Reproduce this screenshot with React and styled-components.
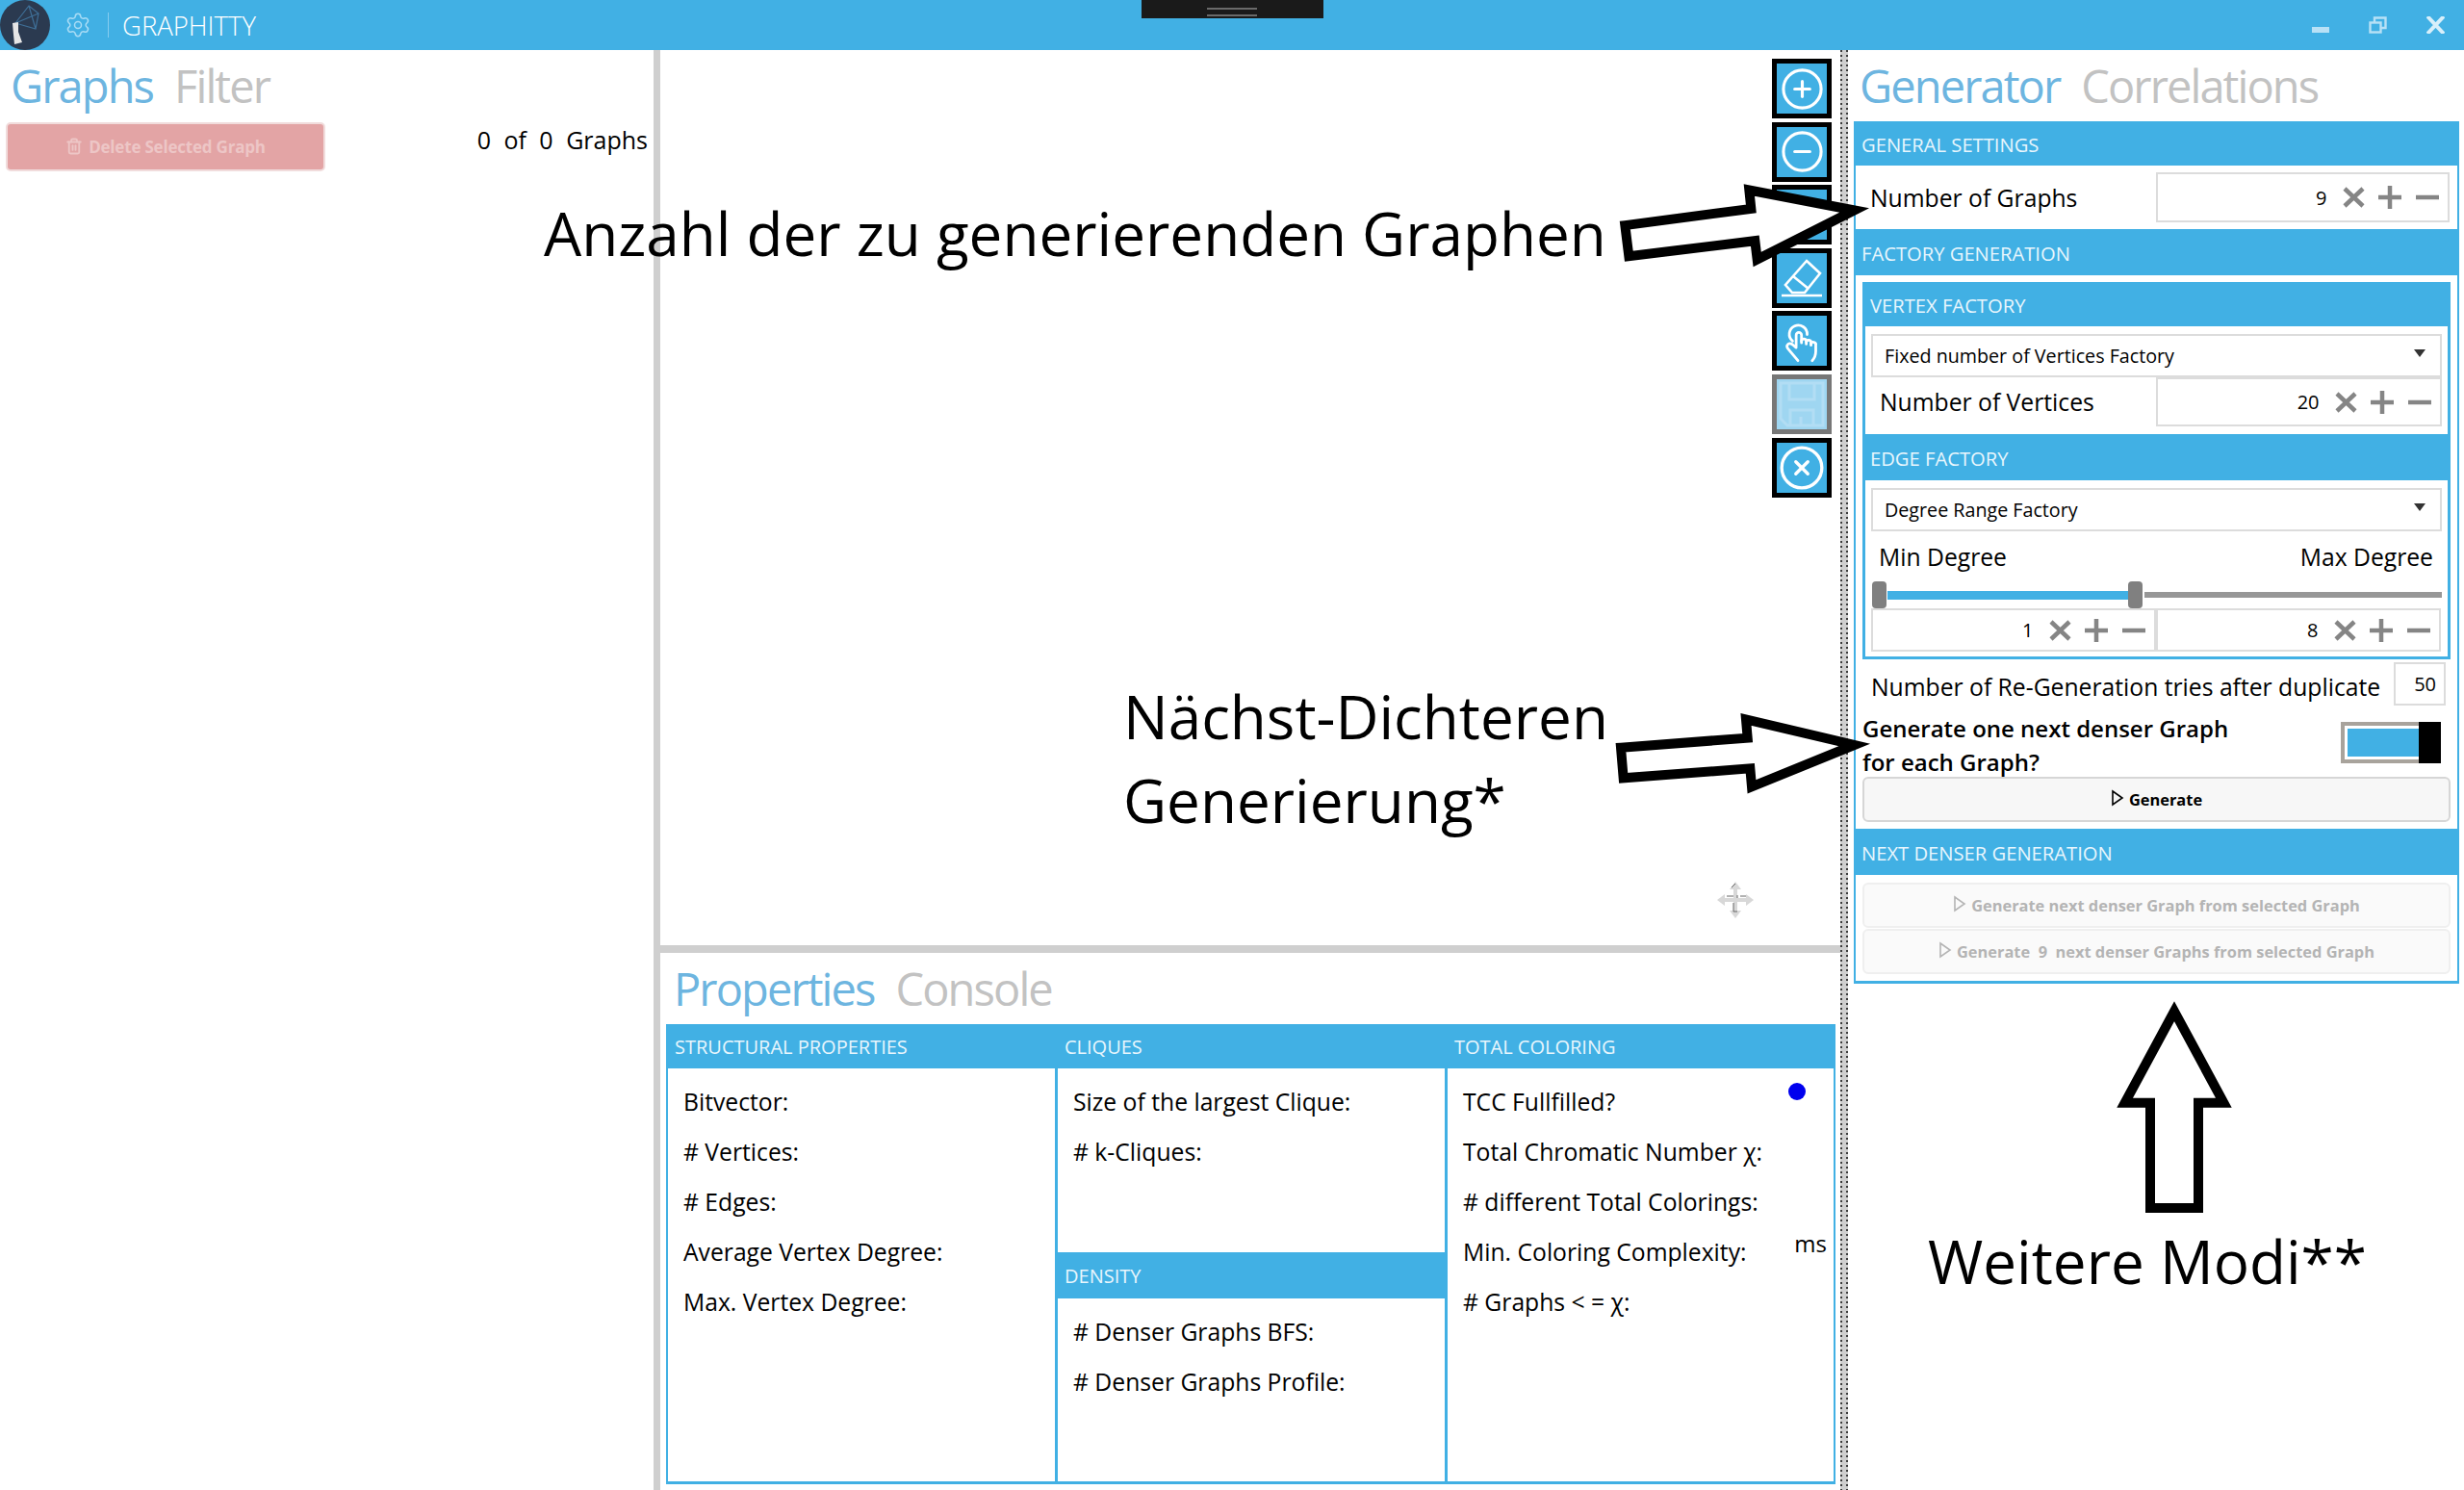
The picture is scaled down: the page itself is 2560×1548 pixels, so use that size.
import React from "react";
import styled, { createGlobalStyle } from "styled-components";
import { Settings, CirclePlus, CircleMinus, CircleX, Trash2 } from "lucide-react";

const BLUE = "#41b0e4";
const FONT = `"Open Sans", "Noto Sans", "Liberation Sans", sans-serif`;

const Global = createGlobalStyle`
  html, body { margin: 0; padding: 0; background: #fff; }
  * { box-sizing: border-box; }
  #root { height: 1548px; overflow: hidden; font-family: ${FONT}; font-stretch: 90%; color: #000; }
`;

const Page = styled.div`
  position: relative;
  width: 2560px;
  height: 1548px;
  display: flex;
  flex-direction: column;
  overflow: hidden;
`;

/* title bar */
const TitleBar = styled.header`
  position: relative;
  height: 52px;
  flex: none;
  background: ${BLUE};
  display: flex;
  align-items: center;
  color: #fff;
`;
const Logo = styled.svg`
  width: 52px;
  height: 52px;
  flex: none;
`;
const Gear = styled.div`
  display: flex;
  margin-left: 15px;
  color: #a9dcf5;
`;
const TitleDivider = styled.div`
  width: 1px;
  height: 26px;
  margin: 0 14px 0 17px;
  background: #86cdef;
`;
const AppName = styled.div`
  font-size: 27.5px;
  font-weight: 300;
`;
const DockHandle = styled.div`
  position: absolute;
  left: 1186px;
  top: 0;
  width: 189px;
  height: 19px;
  background: #1a1a1a;
  &::after {
    content: "";
    position: absolute;
    left: 68px;
    top: 8px;
    width: 52px;
    height: 5px;
    border-top: 2px solid #6a6a6a;
    border-bottom: 2px solid #6a6a6a;
  }
`;
const WindowButtons = styled.div`
  margin-left: auto;
  display: flex;
  align-items: center;
  gap: 41px;
  padding-right: 20px;
`;

/* main columns */
const Main = styled.main`
  flex: 1;
  display: flex;
  min-height: 0;
`;
const LeftPane = styled.section`
  width: 679px;
  flex: none;
  padding: 0 6px 0 6px;
`;
const VSplit = styled.div`
  width: 7px;
  flex: none;
  background: #cfcfcf;
`;
const CenterPane = styled.section`
  flex: 1;
  display: flex;
  flex-direction: column;
  min-width: 0;
`;
const DottedSplit = styled.div`
  width: 8px;
  flex: none;
  background-color: #cfcfcf;
  background-image:
    repeating-linear-gradient(to bottom, #3c3c3c 0 2px, transparent 2px 5px),
    repeating-linear-gradient(to bottom, #3c3c3c 0 2px, transparent 2px 5px);
  background-size: 2px 100%, 2px 100%;
  background-position: left top, right top;
  background-repeat: no-repeat;
`;
const RightPane = styled.section`
  width: 640px;
  flex: none;
  padding: 0 5px 0 6px;
`;

const Tabs = styled.div`
  height: ${(p) => p.$h || 74}px;
  display: flex;
  align-items: center;
  gap: ${(p) => p.$gap || 22}px;
  padding-left: ${(p) => p.$pad || 0}px;
`;
const Tab = styled.span`
  font-size: 47px;
  font-weight: 400;
  line-height: 1;
  letter-spacing: -1.9px;
  color: ${(p) => (p.$active ? "#6db5e0" : "#c2c2c2")};
`;

const GraphsBar = styled.div`
  display: flex;
  align-items: center;
  justify-content: space-between;
  height: 52px;
`;
const DeleteButton = styled.div`
  width: 332px;
  height: 51px;
  display: flex;
  align-items: center;
  justify-content: center;
  gap: 6px;
  background: #e3a4a5;
  border: 2px solid #f1dcdc;
  border-radius: 5px;
  color: #edc6c6;
  font-size: 17px;
  font-weight: 700;
  letter-spacing: -0.2px;
`;
const GraphCount = styled.div`
  font-size: 25px;
  word-spacing: 7px;
  margin-top: -14px;
`;

/* center */
const Canvas = styled.div`
  height: 930px;
  flex: none;
  display: flex;
  flex-direction: column;
  align-items: flex-end;
  gap: 3.6px;
  padding: 9px 9px 0 0;
`;
const ToolButton = styled.div`
  width: 62px;
  height: 62px;
  display: flex;
  align-items: center;
  justify-content: center;
  background: ${(p) => (p.$off ? "#9fd6f1" : BLUE)};
  border: 5px solid ${(p) => (p.$off ? "#777" : "#000")};
  color: ${(p) => (p.$off ? "#b2ddf4" : "#fff")};
`;
const HSplit = styled.div`
  height: 8px;
  flex: none;
  background: #cfcfcf;
`;
const PropertiesArea = styled.div`
  flex: 1;
  display: flex;
  flex-direction: column;
  padding: 0 5px 6px 6px;
  min-height: 0;
`;
const PropGrid = styled.div`
  flex: 1;
  display: grid;
  grid-template-columns: 402px 405px 404px;
  border: solid ${BLUE};
  border-width: 0 2px 3px 2px;
`;
const PropColumn = styled.div`
  display: flex;
  flex-direction: column;
  & + & {
    border-left: 3px solid ${BLUE};
  }
`;
const PropHeader = styled.div`
  height: ${(p) => p.$h}px;
  flex: none;
  display: flex;
  align-items: center;
  background: ${BLUE};
  color: #e8f6fd;
  font-size: 20px;
  margin: ${(p) => (p.$inner ? "0 0 0 -3px" : "0 0 0 -2px")};
  padding-left: ${(p) => (p.$inner ? 10 : 9)}px;
`;
const PropList = styled.div`
  padding: 8px 5px 0 16px;
  height: ${(p) => p.$h || "auto"};
`;
const PropRow = styled.div`
  height: 52px;
  display: flex;
  align-items: center;
  justify-content: space-between;
  font-size: 24.7px;
  white-space: nowrap;
`;
const Dot = styled.span`
  width: 18px;
  height: 18px;
  margin: 0 24px 20px 0;
  border-radius: 50%;
  background: #0000ee;
`;
const Unit = styled.span`
  margin: 0 2px 18px 0;
  font-size: 24px;
`;

/* generator panel */
const Panel = styled.div`
  border: solid ${BLUE};
  border-width: 0 2px 3px 2px;
  height: 896px;
`;
const Header = styled.div`
  height: ${(p) => p.$h || 46}px;
  display: flex;
  align-items: center;
  padding: 2px 0 0 ${(p) => (p.$inner ? 8 : 6)}px;
  background: ${BLUE};
  color: #e8f6fd;
  font-size: 20.2px;
`;
const NumberRow = styled.div`
  height: ${(p) => p.$h}px;
  display: flex;
  align-items: center;
  justify-content: space-between;
  padding: ${(p) => p.$pad};
`;
const Label = styled.span`
  font-size: 24.7px;
  white-space: nowrap;
`;
const Spin = styled.div`
  width: ${(p) => p.$w}px;
  height: ${(p) => p.$hgt}px;
  display: flex;
  align-items: center;
  justify-content: flex-end;
  padding-right: 2px;
  border: 2px solid #dcdcdc;
  font-size: 20px;
`;
const SpinValue = styled.span`
  margin-right: 8px;
`;
const SpinGlyph = styled.svg`
  width: 38.5px;
  height: 28px;
  flex: none;
  stroke: #858585;
  stroke-width: 4.5;
  fill: none;
`;
const InnerBox = styled.div`
  margin: 7px 7px 0;
  height: 392px;
  border: solid ${BLUE};
  border-width: 0 3px 3px 3px;
`;
const BoxHeaderWrap = styled.div`
  margin: 0 -3px;
`;
const BoxBody = styled.div`
  padding: 8px 6px ${(p) => p.$bottom || 0}px;
`;
const Select = styled.div`
  height: 45px;
  display: flex;
  align-items: center;
  justify-content: space-between;
  padding: 0 15px 0 12px;
  border: 2px solid #dcdcdc;
  font-size: 19.7px;
  &::after {
    content: "";
    margin-top: -5px;
    border: 6px solid transparent;
    border-top: 8px solid #333;
    border-bottom: 0;
  }
`;
const DegreeLabels = styled.div`
  height: 52px;
  display: flex;
  align-items: center;
  justify-content: space-between;
  padding: 0 9px 0 8px;
`;
const Slider = styled.div`
  height: 28px;
  display: flex;
  align-items: center;
`;
const Thumb = styled.div`
  width: 15px;
  height: 28px;
  flex: none;
  margin-left: ${(p) => (p.$first ? 1 : 0)}px;
  border-radius: 4px;
  background: #808080;
`;
const Fill = styled.div`
  flex: ${(p) => (p.$rest ? "1" : "none")};
  width: ${(p) => (p.$rest ? "auto" : "250px")};
  height: ${(p) => (p.$rest ? 6 : 9)}px;
  margin-left: ${(p) => (p.$rest ? 2 : 1)}px;
  background: ${(p) => (p.$rest ? "#979797" : BLUE)};
`;
const SpinPair = styled.div`
  display: grid;
  grid-template-columns: 296px 296px;
`;
const RegenRow = styled.div`
  height: 56px;
  display: flex;
  align-items: center;
  justify-content: space-between;
  padding: 0 12px 0 16px;
`;
const RegenInput = styled.div`
  width: 54px;
  height: 45px;
  margin-top: -5px;
  padding-right: 8px;
  display: flex;
  align-items: center;
  justify-content: flex-end;
  border: 2px solid #dcdcdc;
  font-size: 20px;
`;
const ToggleRow = styled.div`
  height: 66px;
  display: flex;
  align-items: center;
  justify-content: space-between;
  padding: 0 17px 0 7px;
`;
const ToggleText = styled.div`
  font-size: 24px;
  font-weight: 600;
  line-height: 35px;
`;
const Toggle = styled.div`
  width: 104px;
  height: 43px;
  display: flex;
  margin-bottom: 6px;
  padding: 3px 0 3px 3px;
  background: #fff;
  border: 4px solid #a8a39c;
  border-right: 0;
`;
const ToggleFill = styled.div`
  flex: 1;
  background: ${BLUE};
`;
const ToggleKnob = styled.div`
  width: 23px;
  margin: -7px 0;
  background: #000;
`;
const ActionGroup = styled.div`
  padding: ${(p) => p.$pad};
  display: flex;
  flex-direction: column;
  gap: 1px;
`;
const ActionButton = styled.div`
  height: 47px;
  display: flex;
  align-items: center;
  justify-content: center;
  gap: 5px;
  border: 2px solid ${(p) => (p.$off ? "#efefef" : "#d6d6d6")};
  border-radius: 6px;
  background: ${(p) => (p.$off ? "#fafafa" : "#f7f7f7")};
  color: ${(p) => (p.$off ? "#b4b4b4" : "#000")};
  font-size: 16.4px;
  font-weight: 700;
  white-space: pre;
`;
const PlayMark = styled.svg`
  width: 14px;
  height: 18px;
  margin-top: -4px;
  fill: none;
  stroke: ${(p) => (p.$off ? "#b4b4b4" : "#000")};
  stroke-width: 1.6;
`;

/* annotations drawn over the app */
const Note = styled.div`
  position: absolute;
  left: ${(p) => p.$x}px;
  top: ${(p) => p.$y}px;
  font-size: 62px;
  line-height: 87px;
  white-space: nowrap;
`;
const ArrowMark = styled.svg`
  position: absolute;
  left: ${(p) => p.$x}px;
  top: ${(p) => p.$y}px;
  overflow: visible;
  fill: #fff;
  stroke: #000;
  stroke-width: 30;
  stroke-linejoin: miter;
  stroke-miterlimit: 10;
`;
const MoveCursor = styled.svg`
  position: absolute;
  left: 1784px;
  top: 916px;
  width: 38px;
  height: 38px;
`;

const Play = ({ off }) => (
  <PlayMark $off={off} viewBox="0 0 14 18">
    <polygon points="2,2 12,9 2,16" />
  </PlayMark>
);

const SpinIcons = () => (
  <>
    <SpinGlyph viewBox="0 0 38.5 28">
      <path d="M10 5 L29 23 M29 5 L10 23" />
    </SpinGlyph>
    <SpinGlyph viewBox="0 0 38.5 28">
      <path d="M7 14 H31 M19 2 V26" />
    </SpinGlyph>
    <SpinGlyph viewBox="0 0 38.5 28">
      <path d="M7 14 H31" />
    </SpinGlyph>
  </>
);

const SpinBox = ({ w, h, value }) => (
  <Spin $w={w} $hgt={h}>
    <SpinValue>{value}</SpinValue>
    <SpinIcons />
  </Spin>
);

const EraserIcon = () => (
  <svg width="44" height="44" viewBox="0 0 44 44" fill="none" stroke="#fff" strokeWidth="2.6">
    <path d="M27 4 L41 17 L25 37 L12 37 L5 29 Z" />
    <path d="M13 20 L29 33" />
    <path d="M1 40 H43" />
  </svg>
);

const HandIcon = () => (
  <svg width="50" height="50" viewBox="0 0 162 162" fill="none" stroke="#fff" strokeWidth="9" strokeLinecap="round">
    <path d="M50 82 A30 30 0 1 1 99 60" />
    <path d="M62 100 V62 a9 9 0 0 1 18 0 V88" />
    <path d="M80 82 a8 8 0 0 1 16 2 v8" />
    <path d="M96 86 a8 8 0 0 1 16 2 v8" />
    <path d="M112 92 a8 8 0 0 1 16 4 v20 q0 20 -12 32" />
    <path d="M62 104 l-12 -10 q-12 -8 -18 2 q-3 6 4 14 L68 148" />
  </svg>
);

const SaveIcon = () => (
  <svg width="50" height="50" viewBox="0 0 50 50" fill="none" stroke="currentColor" strokeWidth="3">
    <path d="M3 3 H47 V47 H10 L3 40 Z" />
    <path d="M12 3 V20 H38 V3" />
    <path d="M13 47 V31 H37 V47" />
    <path d="M24 38 V47" />
  </svg>
);

const AppLogo = () => (
  <Logo viewBox="0 0 52 52">
    <circle cx="26" cy="26" r="26" fill="#2b3a50" />
    <g stroke="#3f6f97" strokeWidth="1.2" fill="none">
      <path d="M16 24 L30 6 L40 14 L37 30 Z M16 24 L40 14 M16 24 L37 30 M30 6 L37 30" />
    </g>
    <path d="M13 24 L19 23 L19 33 L23 44 L15 46 L14 36 Z" fill="#e6e6e6" />
  </Logo>
);

const WindowIcons = () => (
  <WindowButtons>
    <svg width="18" height="18" viewBox="0 0 18 18">
      <rect x="0" y="11" width="18" height="6" fill="#b8e1f6" />
    </svg>
    <svg width="19" height="18" viewBox="0 0 19 18" fill="none" stroke="#b8e1f6" strokeWidth="2.4">
      <rect x="1.5" y="6.5" width="11" height="10" />
      <path d="M6 6 V1.5 H17.5 V12 H13" />
    </svg>
    <svg width="19" height="18" viewBox="0 0 19 18" fill="none" stroke="#d7effa" strokeWidth="4">
      <path d="M1 0 L18 18 M18 0 L1 18" />
    </svg>
  </WindowButtons>
);

const rows1 = ["Bitvector:", "# Vertices:", "# Edges:", "Average Vertex Degree:", "Max. Vertex Degree:"];

export default function App() {
  return (
    <Page>
      <Global />
      <TitleBar>
        <AppLogo />
        <Gear><Settings size={28} strokeWidth={1.3} /></Gear>
        <TitleDivider />
        <AppName>GRAPHITTY</AppName>
        <DockHandle />
        <WindowIcons />
      </TitleBar>

      <Main>
        <LeftPane>
          <Tabs $pad={5}>
            <Tab $active>Graphs</Tab>
            <Tab>Filter</Tab>
          </Tabs>
          <GraphsBar>
            <DeleteButton>
              <Trash2 size={18} strokeWidth={2.5} />
              Delete Selected Graph
            </DeleteButton>
            <GraphCount>0 of 0 Graphs</GraphCount>
          </GraphsBar>
        </LeftPane>
        <VSplit />

        <CenterPane>
          <Canvas>
            <ToolButton><CirclePlus size={47} strokeWidth={1.6} /></ToolButton>
            <ToolButton><CircleMinus size={47} strokeWidth={1.6} /></ToolButton>
            <ToolButton />
            <ToolButton><EraserIcon /></ToolButton>
            <ToolButton><HandIcon /></ToolButton>
            <ToolButton $off><SaveIcon /></ToolButton>
            <ToolButton><CircleX size={50} strokeWidth={1.6} /></ToolButton>
          </Canvas>
          <HSplit />
          <PropertiesArea>
            <Tabs $h={74} $pad={8}>
              <Tab $active>Properties</Tab>
              <Tab>Console</Tab>
            </Tabs>
            <PropGrid>
              <PropColumn>
                <PropHeader $h={46}>STRUCTURAL PROPERTIES</PropHeader>
                <PropList>
                  {rows1.map((r) => <PropRow key={r}>{r}</PropRow>)}
                </PropList>
              </PropColumn>
              <PropColumn>
                <PropHeader $h={46} $inner>CLIQUES</PropHeader>
                <PropList $h="191px">
                  <PropRow>Size of the largest Clique:</PropRow>
                  <PropRow># k-Cliques:</PropRow>
                </PropList>
                <PropHeader $h={48} $inner>DENSITY</PropHeader>
                <PropList>
                  <PropRow># Denser Graphs BFS:</PropRow>
                  <PropRow># Denser Graphs Profile:</PropRow>
                </PropList>
              </PropColumn>
              <PropColumn>
                <PropHeader $h={46} $inner>TOTAL COLORING</PropHeader>
                <PropList>
                  <PropRow>TCC Fullfilled?<Dot /></PropRow>
                  <PropRow>Total Chromatic Number χ:</PropRow>
                  <PropRow># different Total Colorings:</PropRow>
                  <PropRow>Min. Coloring Complexity:<Unit>ms</Unit></PropRow>
                  <PropRow># Graphs &lt; = χ:</PropRow>
                </PropList>
              </PropColumn>
            </PropGrid>
          </PropertiesArea>
        </CenterPane>
        <DottedSplit />

        <RightPane>
          <Tabs $pad={6}>
            <Tab $active>Generator</Tab>
            <Tab>Correlations</Tab>
          </Tabs>
          <Panel>
            <Header>GENERAL SETTINGS</Header>
            <NumberRow $h={66} $pad="0 8px 0 15px">
              <Label>Number of Graphs</Label>
              <SpinBox w={305} h={52} value="9" />
            </NumberRow>
            <Header $h={48}>FACTORY GENERATION</Header>
            <InnerBox>
              <BoxHeaderWrap><Header $inner>VERTEX FACTORY</Header></BoxHeaderWrap>
              <BoxBody $bottom={8}>
                <Select>Fixed number of Vertices Factory</Select>
                <NumberRow $h={51} $pad="0 0 0 9px">
                  <Label>Number of Vertices</Label>
                  <SpinBox w={297} h={51} value="20" />
                </NumberRow>
              </BoxBody>
              <BoxHeaderWrap><Header $inner $h={48}>EDGE FACTORY</Header></BoxHeaderWrap>
              <BoxBody>
                <Select>Degree Range Factory</Select>
                <DegreeLabels>
                  <Label>Min Degree</Label>
                  <Label>Max Degree</Label>
                </DegreeLabels>
                <Slider>
                  <Thumb $first />
                  <Fill />
                  <Thumb />
                  <Fill $rest />
                </Slider>
                <SpinPair>
                  <SpinBox w={296} h={45} value="1" />
                  <SpinBox w={296} h={45} value="8" />
                </SpinPair>
              </BoxBody>
            </InnerBox>
            <RegenRow>
              <Label>Number of Re-Generation tries after duplicate</Label>
              <RegenInput>50</RegenInput>
            </RegenRow>
            <ToggleRow>
              <ToggleText>Generate one next denser Graph<br />for each Graph?</ToggleText>
              <Toggle>
                <ToggleFill />
                <ToggleKnob />
              </Toggle>
            </ToggleRow>
            <ActionGroup $pad="0 7px 7px">
              <ActionButton><Play />Generate</ActionButton>
            </ActionGroup>
            <Header $h={48}>NEXT DENSER GENERATION</Header>
            <ActionGroup $pad="8px 7px 0">
              <ActionButton $off><Play off />Generate next denser Graph from selected Graph</ActionButton>
              <ActionButton $off><Play off />Generate  9  next denser Graphs from selected Graph</ActionButton>
            </ActionGroup>
          </Panel>
        </RightPane>
      </Main>

      <Note $x={565} $y={199}>Anzahl der zu generierenden Graphen</Note>
      <Note $x={1167} $y={701}>Nächst-Dichteren<br />Generierung*</Note>
      <Note $x={2003} $y={1267}>Weitere Modi**</Note>

      <ArrowMark $x={1660} $y={40} width="280" height="267" viewBox="0 0 840 800">
        <polygon points="85,582 478,530 472,472 800,535 497,688 490,630 97,678" />
      </ArrowMark>
      <ArrowMark $x={1660} $y={720} width="280" height="120" viewBox="0 0 840 360">
        <polygon points="72,170 467,140 462,82 800,162 480,292 475,235 80,265" />
      </ArrowMark>
      <ArrowMark $x={2160} $y={1030} width="200" height="240" viewBox="0 0 600 720">
        <polygon points="297,62 143,347 222,347 222,675 372,675 372,347 451,347" />
      </ArrowMark>

      <MoveCursor viewBox="0 0 38 38">
        <path d="M19 0 L25 8 H21 V17 H30 V13 L38 19 L30 25 V21 H21 V30 H25 L19 38 L13 30 H17 V21 H8 V25 L0 19 L8 13 V17 H17 V8 H13 Z" fill="#d8d8d8" />
        <path d="M15 6 L19 2 M17 15 H10 M21 17 V14 M24 15 H30 M17 22 V31 H21" fill="none" stroke="#666" strokeWidth="1" />
      </MoveCursor>
    </Page>
  );
}
